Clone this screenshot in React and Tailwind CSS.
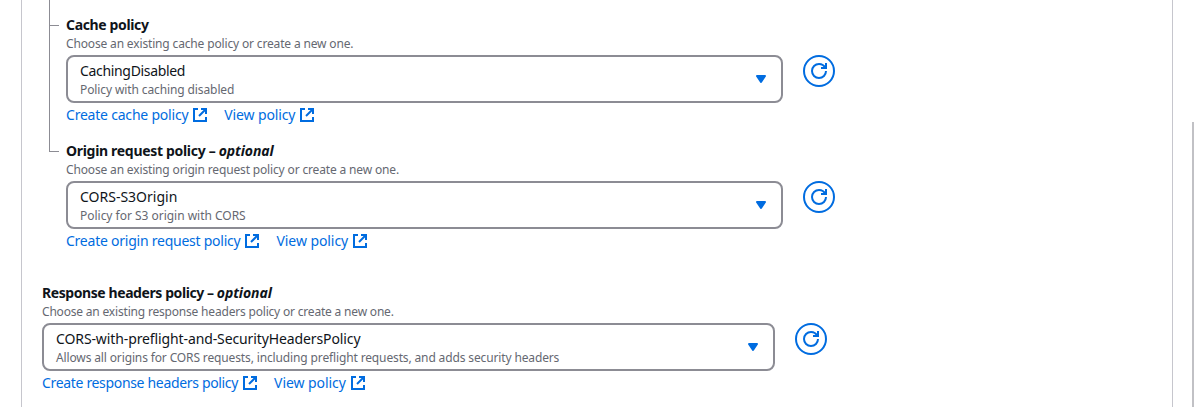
function ExternalIcon() {
  return (
    <svg className="ml-1 size-4 shrink-0" viewBox="0 0 16 16" fill="none" stroke="currentColor" strokeWidth="2">
      <path d="M9 2h5v5" />
      <path d="m7 9 7-7" />
      <path d="M6 2H2v12h12v-4" />
    </svg>
  );
}

function RefreshButton() {
  return (
    <button className="ml-5 flex size-8 shrink-0 items-center justify-center rounded-full border-2 border-[#006ce0] text-[#006ce0]">
      <svg className="size-4" viewBox="0 0 16 16" fill="none" stroke="currentColor" strokeWidth="2">
        <path d="M15 8c0 3.87-3.13 7-7 7s-7-3.13-7-7 3.13-7 7-7c2.79 0 5.2 1.63 6.33 4" />
        <path d="M10 5h5V0" />
      </svg>
    </button>
  );
}

function PolicyField({ title, optional, description, value, detail, create, width, spacing }) {
  return (
    <section className="h-[126px] whitespace-nowrap">
      <h3 className="h-5 text-sm leading-5 font-bold">
        <span className={spacing.title}>{title}{optional && " – "}</span>
        {optional && <i className="tracking-[-0.08px]">optional</i>}
      </h3>
      <p className="h-5 text-xs leading-[18px] text-[#656871]"><span className={spacing.description}>{description}</span></p>
      <div className="flex">
        <div className={`${width} flex h-12 items-center justify-between rounded-lg border-2 border-[#8c8c94] px-3`}>
          <div className="pt-px">
            <div className="h-5 text-sm leading-5"><span className={spacing.value}>{value}</span></div>
            <div className="h-[18px] text-xs leading-[18px] text-[#656871]"><span className={spacing.detail}>{detail}</span></div>
          </div>
          <svg className="size-4 shrink-0 text-[#006ce0]" viewBox="0 0 16 16" fill="currentColor" stroke="currentColor" strokeWidth="2" strokeLinejoin="round">
            <path d="M4 5h8l-4 6-4-6z" />
          </svg>
        </div>
        <RefreshButton />
      </div>
      <div className="mt-0.5 flex h-5 items-center gap-4 text-sm leading-5 text-[#006ce0]">
        <a className="flex items-center"><span className={spacing.create}>{create}</span><ExternalIcon /></a>
        <a className="flex items-center"><span className={spacing.view}>View policy</span><ExternalIcon /></a>
      </div>
    </section>
  );
}

const cacheSpacing = {
  title: "tracking-[-0.36px]",
  description: "tracking-[-0.155px]",
  value: "tracking-[-0.33px]",
  detail: "tracking-[-0.11px]",
  create: "tracking-[-0.21px]",
  view: "tracking-[-0.14px]",
};

const originSpacing = {
  title: "tracking-[-0.31px]",
  description: "tracking-[-0.155px]",
  value: "tracking-normal",
  detail: "tracking-[-0.02px]",
  create: "tracking-[-0.24px]",
  view: "tracking-[-0.07px]",
};

const responseSpacing = {
  title: "tracking-[-0.42px]",
  description: "tracking-[-0.19px]",
  value: "tracking-[-0.11px]",
  detail: "tracking-[-0.135px]",
  create: "tracking-[-0.33px]",
  view: "tracking-[-0.07px]",
};

export default function App() {
  return (
    <div className="flex h-[407px] w-[1194px] justify-between overflow-hidden bg-white font-['Noto_Sans','Open_Sans',sans-serif] text-[#0f141a]">
      <main className="ml-[21px] w-[1152px] shrink-0 border-x border-[#c6c6cd] pl-5">
        <div className="flex h-[267px] pl-[7px]">
          <div className="w-[10px]">
            <div className="h-[26px] border-b border-l border-[#8c8c94]" />
            <div className="h-[126px] border-b border-l border-[#8c8c94]" />
          </div>
          <div className="pt-[15px] pl-[7px]">
            <PolicyField title="Cache policy" description="Choose an existing cache policy or create a new one." value="CachingDisabled" detail="Policy with caching disabled" create="Create cache policy" width="w-[717px]" spacing={cacheSpacing} />
            <PolicyField title="Origin request policy" optional description="Choose an existing origin request policy or create a new one." value="CORS-S3Origin" detail="Policy for S3 origin with CORS" create="Create origin request policy" width="w-[717px]" spacing={originSpacing} />
          </div>
        </div>
        <div className="pt-4">
          <PolicyField title="Response headers policy" optional description="Choose an existing response headers policy or create a new one." value="CORS-with-preflight-and-SecurityHeadersPolicy" detail="Allows all origins for CORS requests, including preflight requests, and adds security headers" create="Create response headers policy" width="w-[733px]" spacing={responseSpacing} />
        </div>
      </main>
      <div className="mt-[122px] h-[285px] w-0.5 bg-[#c1c1c5]" />
    </div>
  );
}
